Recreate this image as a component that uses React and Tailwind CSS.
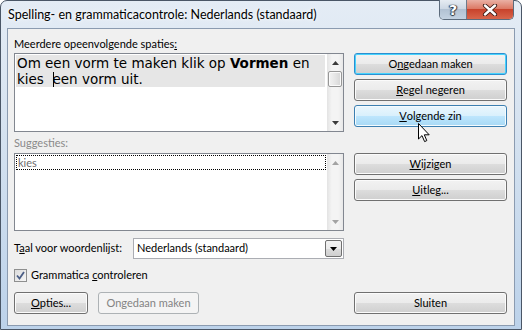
import React from 'react'

const ui = { fontFamily: 'Lato, "Liberation Sans", sans-serif' }

function Btn({ children, kind = 'normal', className = '' }) {
  const look = {
    normal: 'border-[#707070] text-black bg-[linear-gradient(to_bottom,#f2f2f2_0%,#ebebeb_50%,#dddddd_50%,#cfcfcf_100%)] shadow-[inset_0_0_0_1px_#fbfbfb]',
    default: 'border-[#2b8fd0] text-black bg-[linear-gradient(to_bottom,#f2f2f2_0%,#ebebeb_50%,#dddddd_50%,#cfcfcf_100%)] shadow-[inset_0_0_0_1px_#47d3fd]',
    hover: 'border-[#3c7fb1] text-black bg-[linear-gradient(to_bottom,#eaf6fd_0%,#d9f0fc_50%,#bee6fd_50%,#a7d9f5_100%)] shadow-[inset_0_0_0_1px_#f4fbfe]',
    disabled: 'border-[#adb2b5] text-[#838383] bg-[#f4f4f4]',
  }[kind]
  return (
    <div className={`h-[22px] rounded-[3px] border flex items-center justify-center text-[11px] ${look} ${className}`}>
      {children}
    </div>
  )
}

function ScrollBar({ thumb, dim }) {
  const arrow = dim ? '#a3a3a3' : '#3b3b3b'
  return (
    <div className="w-[16px] h-full flex flex-col bg-[linear-gradient(to_right,#e3e3e3,#f4f4f4_30%,#f4f4f4_70%,#e8e8e8)]">
      <div className="h-[17px] flex items-center justify-center">
        <svg width="7" height="4" viewBox="0 0 7 4"><path d="M3.5 0 L7 4 L0 4 Z" fill={arrow} /></svg>
      </div>
      {thumb && (
        <div className="mx-[1px] h-[16px] rounded-[2px] border border-[#979797] bg-[linear-gradient(to_right,#f3f3f3,#e6e6e6_50%,#d6d6d6)] shadow-[inset_0_0_0_1px_#fafafa]" />
      )}
      <div className="flex-1" />
      <div className="h-[17px] flex items-center justify-center">
        <svg width="7" height="4" viewBox="0 0 7 4"><path d="M0 0 L7 0 L3.5 4 Z" fill={arrow} /></svg>
      </div>
    </div>
  )
}

export default function App() {
  return (
    <div className="w-[522px] h-[330px] bg-white relative overflow-hidden" style={ui}>
      <div className="w-full h-full rounded-t-[7px] border border-[#4a5666] flex flex-col bg-[linear-gradient(to_bottom,#e4ecf5_0%,#d5e2f0_40%,#bcd2ea_100%)]">
        {/* title bar */}
        <div className="h-[27px] flex items-start">
          <div className="pl-[7px] pt-[5px] text-[12.5px] text-black [text-shadow:0_0_6px_#ffffff,0_0_3px_#ffffff]">
            Spelling- en grammaticacontrole: Nederlands (standaard)
          </div>
          <div className="ml-auto mr-[7px] -mt-px flex h-[20px] rounded-b-[5px] border border-[#5c6b7c] border-t-0 overflow-hidden">
            <div className="w-[27px] flex items-center justify-center border-r border-[#6d7b8b] bg-[linear-gradient(to_bottom,#e6ecf2_0%,#cdd8e4_45%,#b2c2d3_50%,#c3d2e1_100%)]">
              <span className="text-white font-bold text-[14px] leading-none [text-shadow:0_0_1px_#2c3644,1px_0_1px_#2c3644,-1px_0_1px_#2c3644,0_1px_1px_#2c3644]" style={{ fontFamily: '"DejaVu Sans", sans-serif' }}>?</span>
            </div>
            <div className="w-[46px] flex items-center justify-center bg-[linear-gradient(to_bottom,#eab0a4_0%,#dc7a66_45%,#c8432c_50%,#d8654b_100%)]">
              <svg width="16" height="12" viewBox="0 0 16 12">
                <path d="M3 1.5 L13 10.5 M13 1.5 L3 10.5" stroke="#3b1a14" strokeWidth="4.2" strokeLinecap="round" />
                <path d="M3 1.5 L13 10.5 M13 1.5 L3 10.5" stroke="#ffffff" strokeWidth="2.4" strokeLinecap="round" />
              </svg>
            </div>
          </div>
        </div>

        {/* client area */}
        <div className="flex-1 mx-[6px] mb-[3px] border border-[#8b9bb0] bg-[#f0f0f0] pl-[6px] pr-[7px] flex flex-col">
          {/* sentence box + buttons */}
          <div className="flex gap-[10px]">
            <div className="w-[330px]">
              <div className="h-[24px] pt-[8px] text-[11px] leading-[14px] text-black">
                Meerdere opeenvolgende spaties<span className="underline">:</span>
              </div>
              <div className="h-[79px] border border-[#828790] bg-white flex">
                <div className="flex-1 pl-[1px] pt-[1px] pr-[2px]">
                  <div className="bg-[#e6e6e6] text-[13.5px] leading-[16px] text-black pl-[1px] whitespace-pre" style={{ fontFamily: '"DejaVu Sans", Verdana, sans-serif' }}>
                    <div>Om een vorm te maken klik op <b>Vormen</b> en</div>
                    <div>kies  <span className="inline-block align-middle w-px h-[15px] bg-black -mr-px -mt-[2px]" />een vorm uit.</div>
                  </div>
                </div>
                <ScrollBar thumb />
              </div>
            </div>
            <div className="w-[153px] pt-[24px] flex flex-col gap-[4px]">
              <Btn kind="default">O<span className="underline">n</span>gedaan maken</Btn>
              <Btn><span className="underline">R</span>egel negeren</Btn>
              <Btn kind="hover"><span className="underline">V</span>olgende zin</Btn>
            </div>
          </div>

          {/* suggestions */}
          <div className="flex gap-[10px]">
            <div className="w-[330px]">
              <div className="h-[21px] pt-[4px] text-[11px] leading-[14px] text-[#8a8a8a]">Suggesties:</div>
              <div className="h-[78px] border border-[#828790] bg-white flex">
                <div className="flex-1 pl-[1px] pt-[1px] pr-[1px]">
                  <div className="h-[15px] border border-dotted border-black text-[11px] leading-[13px] pl-[1px] text-[#6d6d6d]">kies</div>
                </div>
                <ScrollBar dim />
              </div>
            </div>
            <div className="w-[153px] pt-[21px] flex flex-col gap-[4px]">
              <Btn><span className="underline">W</span>ijzigen</Btn>
              <Btn><span className="underline">U</span>itleg...</Btn>
            </div>
          </div>

          {/* language row */}
          <div className="mt-[7px] h-[21px] flex items-center">
            <div className="w-[119px] text-[11px] text-black">T<span className="underline">a</span>al voor woordenlijst:</div>
            <div className="w-[211px] h-full border border-[#abadb3] bg-white flex items-center">
              <div className="flex-1 pl-[3px] text-[11px] text-black">Nederlands (standaard)</div>
              <div className="w-[17px] h-[17px] mr-px rounded-[2px] border border-[#707070] flex items-center justify-center bg-[linear-gradient(to_bottom,#f2f2f2_0%,#ebebeb_50%,#dddddd_50%,#cfcfcf_100%)]">
                <svg width="7" height="4" viewBox="0 0 7 4"><path d="M0 0 L7 0 L3.5 4 Z" fill="#000" /></svg>
              </div>
            </div>
          </div>

          {/* checkbox */}
          <div className="mt-[10px] h-[13px] flex items-center gap-[4px]">
            <div className="w-[13px] h-[13px] border border-[#8e8f8f] bg-[linear-gradient(135deg,#dcdcdc,#f6f6f6)] flex items-center justify-center">
              <svg width="9" height="9" viewBox="0 0 9 9">
                <path d="M1 4.5 L3.5 7.5 L8 1" fill="none" stroke="#4b5e86" strokeWidth="1.8" />
              </svg>
            </div>
            <div className="text-[11px] text-black">Grammatica <span className="underline">c</span>ontroleren</div>
          </div>

          {/* bottom buttons */}
          <div className="mt-[10px] flex">
            <Btn className="w-[74px]"><span className="underline">O</span>pties...</Btn>
            <Btn kind="disabled" className="w-[101px] ml-[10px]">Ongedaan maken</Btn>
            <Btn className="w-[153px] ml-auto">Sluiten</Btn>
          </div>
        </div>
      </div>

      {/* mouse pointer */}
      <svg className="absolute left-[418px] top-[123px]" width="13" height="20" viewBox="0 0 13 20">
        <path d="M0.5 0.5 L0.5 16 L4 12.6 L6.6 18.6 L8.8 17.6 L6.3 11.8 L11.2 11.8 Z" fill="#ffffff" stroke="#000000" strokeWidth="1" strokeLinejoin="round" />
      </svg>
    </div>
  )
}
